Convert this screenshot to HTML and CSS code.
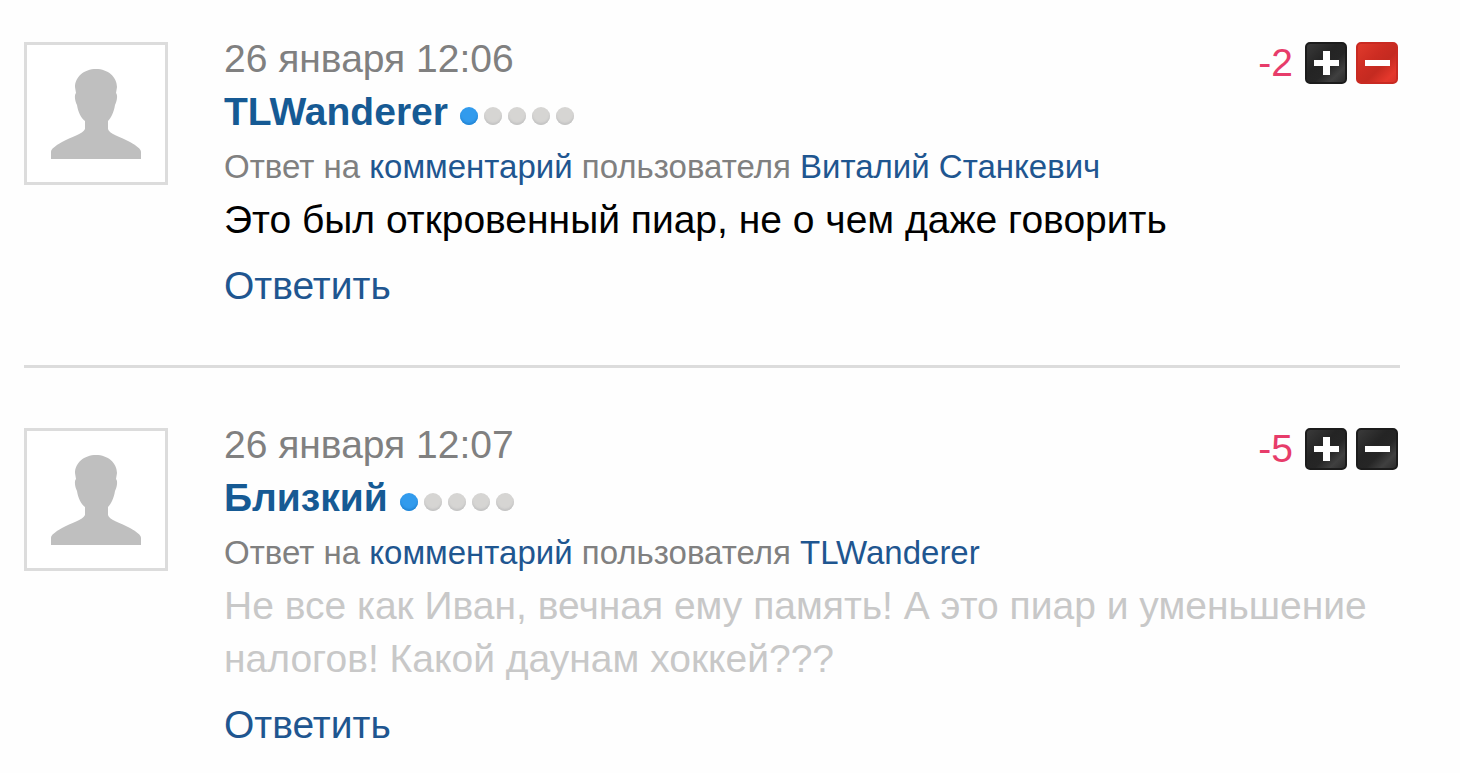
FILE: index.html
```html
<!DOCTYPE html>
<html lang="ru">
<head>
<meta charset="utf-8">
<meta name="viewport" content="width=device-width, initial-scale=1">
<title>Комментарии</title>
<link rel="stylesheet" href="styles.css">
</head>
<body>
<svg class="defs" aria-hidden="true">
  <symbol id="person" viewBox="0 0 90 90">
    <path d="M45 0C57 0 66 8 66 18L65 24C67 26 66 32 64 36C63 43 60 49 57 52V60C58 65 70 68 79 73C86 77 90 80 90 83V90H0V83C0 80 4 77 11 73C20 68 32 65 34 60V52C30 49 27 43 26 36C24 32 23 26 25 24L24 18C24 8 33 0 45 0Z" fill="#bfbfbf"/>
  </symbol>
</svg>
<main class="comments">
  <article class="comment">
    <div class="avatar"><svg class="person" aria-hidden="true"><use href="#person"/></svg></div>
    <div class="body">
      <time class="date">26 января 12:06</time>
      <div class="author"><a class="name" href="#">TLWanderer</a><span class="rank"><i class="dot on"></i><i class="dot"></i><i class="dot"></i><i class="dot"></i><i class="dot"></i></span></div>
      <p class="reply-to">Ответ на <a href="#">комментарий</a> пользователя <a href="#">Виталий Станкевич</a></p>
      <p class="text">Это был откровенный пиар, не о чем даже говорить</p>
      <a class="answer" href="#">Ответить</a>
    </div>
    <div class="votes">
      <span class="score">-2</span>
      <button class="vote" type="button" aria-label="Плюс"><svg class="sign" viewBox="0 0 26 26" aria-hidden="true"><path d="M10 1H17V10H26V16H17V25H10V16H1V10H10Z" fill="#fff"/></svg></button>
      <button class="vote down" type="button" aria-label="Минус"><svg class="sign" viewBox="0 0 26 26" aria-hidden="true"><path d="M1 10H26V16H1Z" fill="#fff"/></svg></button>
    </div>
  </article>
  <article class="comment">
    <div class="avatar"><svg class="person" aria-hidden="true"><use href="#person"/></svg></div>
    <div class="body">
      <time class="date">26 января 12:07</time>
      <div class="author"><a class="name" href="#">Близкий</a><span class="rank"><i class="dot on"></i><i class="dot"></i><i class="dot"></i><i class="dot"></i><i class="dot"></i></span></div>
      <p class="reply-to">Ответ на <a href="#">комментарий</a> пользователя <a href="#">TLWanderer</a></p>
      <p class="text faded">Не все как Иван, вечная ему память! А это пиар и уменьшение налогов! Какой даунам хоккей???</p>
      <a class="answer" href="#">Ответить</a>
    </div>
    <div class="votes">
      <span class="score">-5</span>
      <button class="vote" type="button" aria-label="Плюс"><svg class="sign" viewBox="0 0 26 26" aria-hidden="true"><path d="M10 1H17V10H26V16H17V25H10V16H1V10H10Z" fill="#fff"/></svg></button>
      <button class="vote" type="button" aria-label="Минус"><svg class="sign" viewBox="0 0 26 26" aria-hidden="true"><path d="M1 10H26V16H1Z" fill="#fff"/></svg></button>
    </div>
  </article>
</main>
</body>
</html>
```
FILE: styles.css
```css
* { box-sizing: border-box; }
body {
  margin: 0;
  background: #fefefe;
  font-family: "Liberation Sans", Arial, sans-serif;
  font-size: 39px;
  line-height: 53px;
  color: #000;
}
a { color: #1f5690; text-decoration: none; }
p { margin: 0; }
.defs { position: absolute; width: 0; height: 0; }
.comments { padding: 32px 60px 0 24px; }
.comment {
  display: grid;
  grid-template-columns: 144px 1fr auto;
  column-gap: 56px;
  align-items: start;
}
.comment + .comment {
  margin-top: 53px;
  padding-top: 50px;
  border-top: 3px solid #dcdcdc;
}
.avatar {
  grid-column: 1;
  grid-row: 1;
  display: flex;
  align-items: center;
  justify-content: center;
  height: 143px;
  margin-top: 10px;
  border: 3px solid #dcdcdc;
  background: #fff;
}
.person { width: 90px; height: 90px; }
.body { grid-column: 2 / 4; grid-row: 1; min-width: 0; }
.date { display: block; color: #808080; }
.author { display: flex; align-items: center; gap: 12px; }
.name { font-weight: bold; color: #165a94; }
.rank { display: flex; gap: 6px; padding-top: 8px; }
.dot {
  width: 18px;
  height: 18px;
  border-radius: 50%;
  background: #d6d5d3;
  box-shadow: inset 0 -2px 2px #c4c4c4;
}
.dot.on { background: #329bed; box-shadow: inset 0 -2px 2px #2486d6; }
.reply-to { padding-top: 3px; font-size: 33px; line-height: 52px; color: #808080; }
.faded { color: #c8c8c8; }
.answer { display: inline-block; margin-top: 13px; }
.votes {
  grid-column: 3;
  grid-row: 1;
  display: flex;
  align-items: center;
  gap: 9px;
  margin: 10px 2px 0 0;
}
.score { margin-right: 3px; line-height: 42px; color: #e73c6a; }
.vote {
  display: flex;
  align-items: center;
  justify-content: center;
  width: 42px;
  height: 42px;
  padding: 0;
  border: 2px solid #1c1c1c;
  border-radius: 5px;
  background: linear-gradient(135deg, #3a3a3a 0%, #242424 40%, #262626 60%, #404040 80%, #2c2c2c 100%);
  cursor: pointer;
}
.vote.down {
  border-color: #c92a22;
  background: linear-gradient(135deg, #e03a2c 0%, #cc2c22 40%, #c42a20 60%, #e5382c 85%, #d8322a 100%);
}
.sign { width: 26px; height: 26px; }
```
